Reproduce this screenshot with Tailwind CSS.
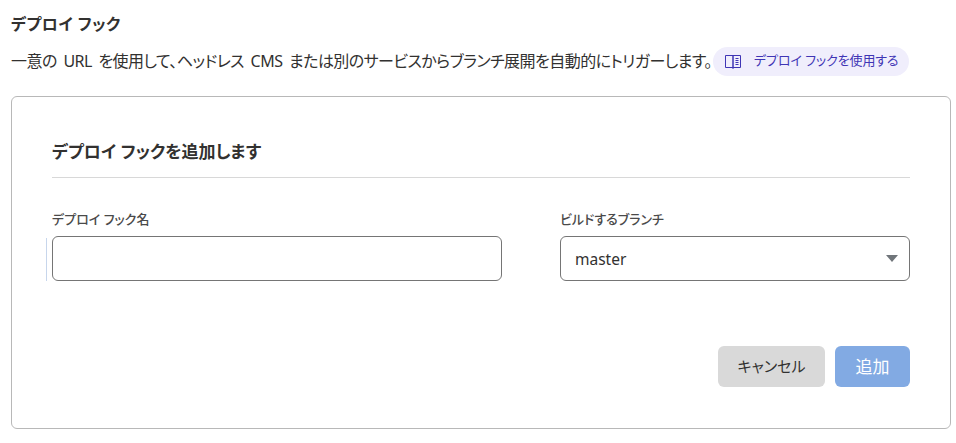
<!DOCTYPE html>
<html lang="ja">
<head>
  <meta charset="UTF-8" />
  <title>デプロイ フック</title>
  <script src="https://cdn.jsdelivr.net/npm/@tailwindcss/browser@4"></script>
</head>
<body class="bg-white h-[443px] overflow-hidden font-['Noto_Sans','Noto_Sans_CJK_JP',sans-serif] [font-feature-settings:'palt'] text-[#323130]">
  <div class="pt-[13px] pl-[11px] pr-[5px]">
    <h2 class="text-base leading-[22px] font-semibold tracking-[0.4px]">デプロイ フック</h2>

    <div class="flex items-center mt-[11px] h-[30px]">
      <p class="w-[702px] text-base leading-[22px] whitespace-nowrap tracking-[-0.55px] [word-spacing:3px]">一意の URL を使用して、ヘッドレス CMS または別のサービスからブランチ展開を自動的にトリガーします。</p>
      <a class="flex items-center w-[196px] h-[29px] pl-[12px] rounded-full bg-[#f0eefc] text-[#3f35b5] text-[13px] tracking-[-0.1px] whitespace-nowrap">
        <svg width="16" height="16" viewBox="0 0 16 16" fill="none" stroke="#3f35b5" stroke-width="1" class="mr-[13px] mt-px">
          <path d="M8 1.5H.5v12H8zM8 1.5h7.5v12H8zM8 13.5v1.5" />
          <path d="M10.5 4.5h3M10.5 6.5h3M10.5 8.5h3M10.5 10.5h3" />
        </svg>
        デプロイ フックを使用する
      </a>
    </div>

    <div class="mt-[20px] w-[940px] h-[333px] border border-[#b8b8b8] rounded-[6px] px-[40px] pt-[42px]">
      <h3 class="text-[17px] leading-[26px] font-semibold pb-[12px] border-b border-[#d8d8d8]">デプロイ フックを追加します</h3>

      <div class="flex justify-between mt-[32px]">
        <div class="relative w-[450px]">
          <label class="block text-[13px] leading-[18px] font-medium text-[#4a4a4a] mb-[8px]">デプロイ フック名</label>
          <input type="text" class="block w-full h-[45px] border border-[#757575] rounded-[6px] bg-white" />
          <span class="absolute left-[-6px] top-[28px] h-[43px] w-px bg-[#c7d6ec]"></span>
        </div>
        <div class="w-[350px]">
          <label class="block text-[13px] leading-[18px] font-medium text-[#4a4a4a] mb-[8px]">ビルドするブランチ</label>
          <div class="flex items-center justify-between h-[45px] border border-[#757575] rounded-[6px] pl-[14px] pr-[11px] text-[15.5px]">
            <span class="pt-[2px]">master</span>
            <span class="w-0 h-0 border-x-[6px] border-x-transparent border-t-[7px] border-t-[#70757a]"></span>
          </div>
        </div>
      </div>

      <div class="flex justify-end gap-[10px] mt-[65px]">
        <button class="w-[107px] h-[41px] rounded-[6px] bg-[#d9d9d9] text-[#323130] text-[15px]">キャンセル</button>
        <button class="w-[75px] h-[41px] rounded-[6px] bg-[#82aae3] text-white text-[17px]">追加</button>
      </div>
    </div>
  </div>
</body>
</html>
